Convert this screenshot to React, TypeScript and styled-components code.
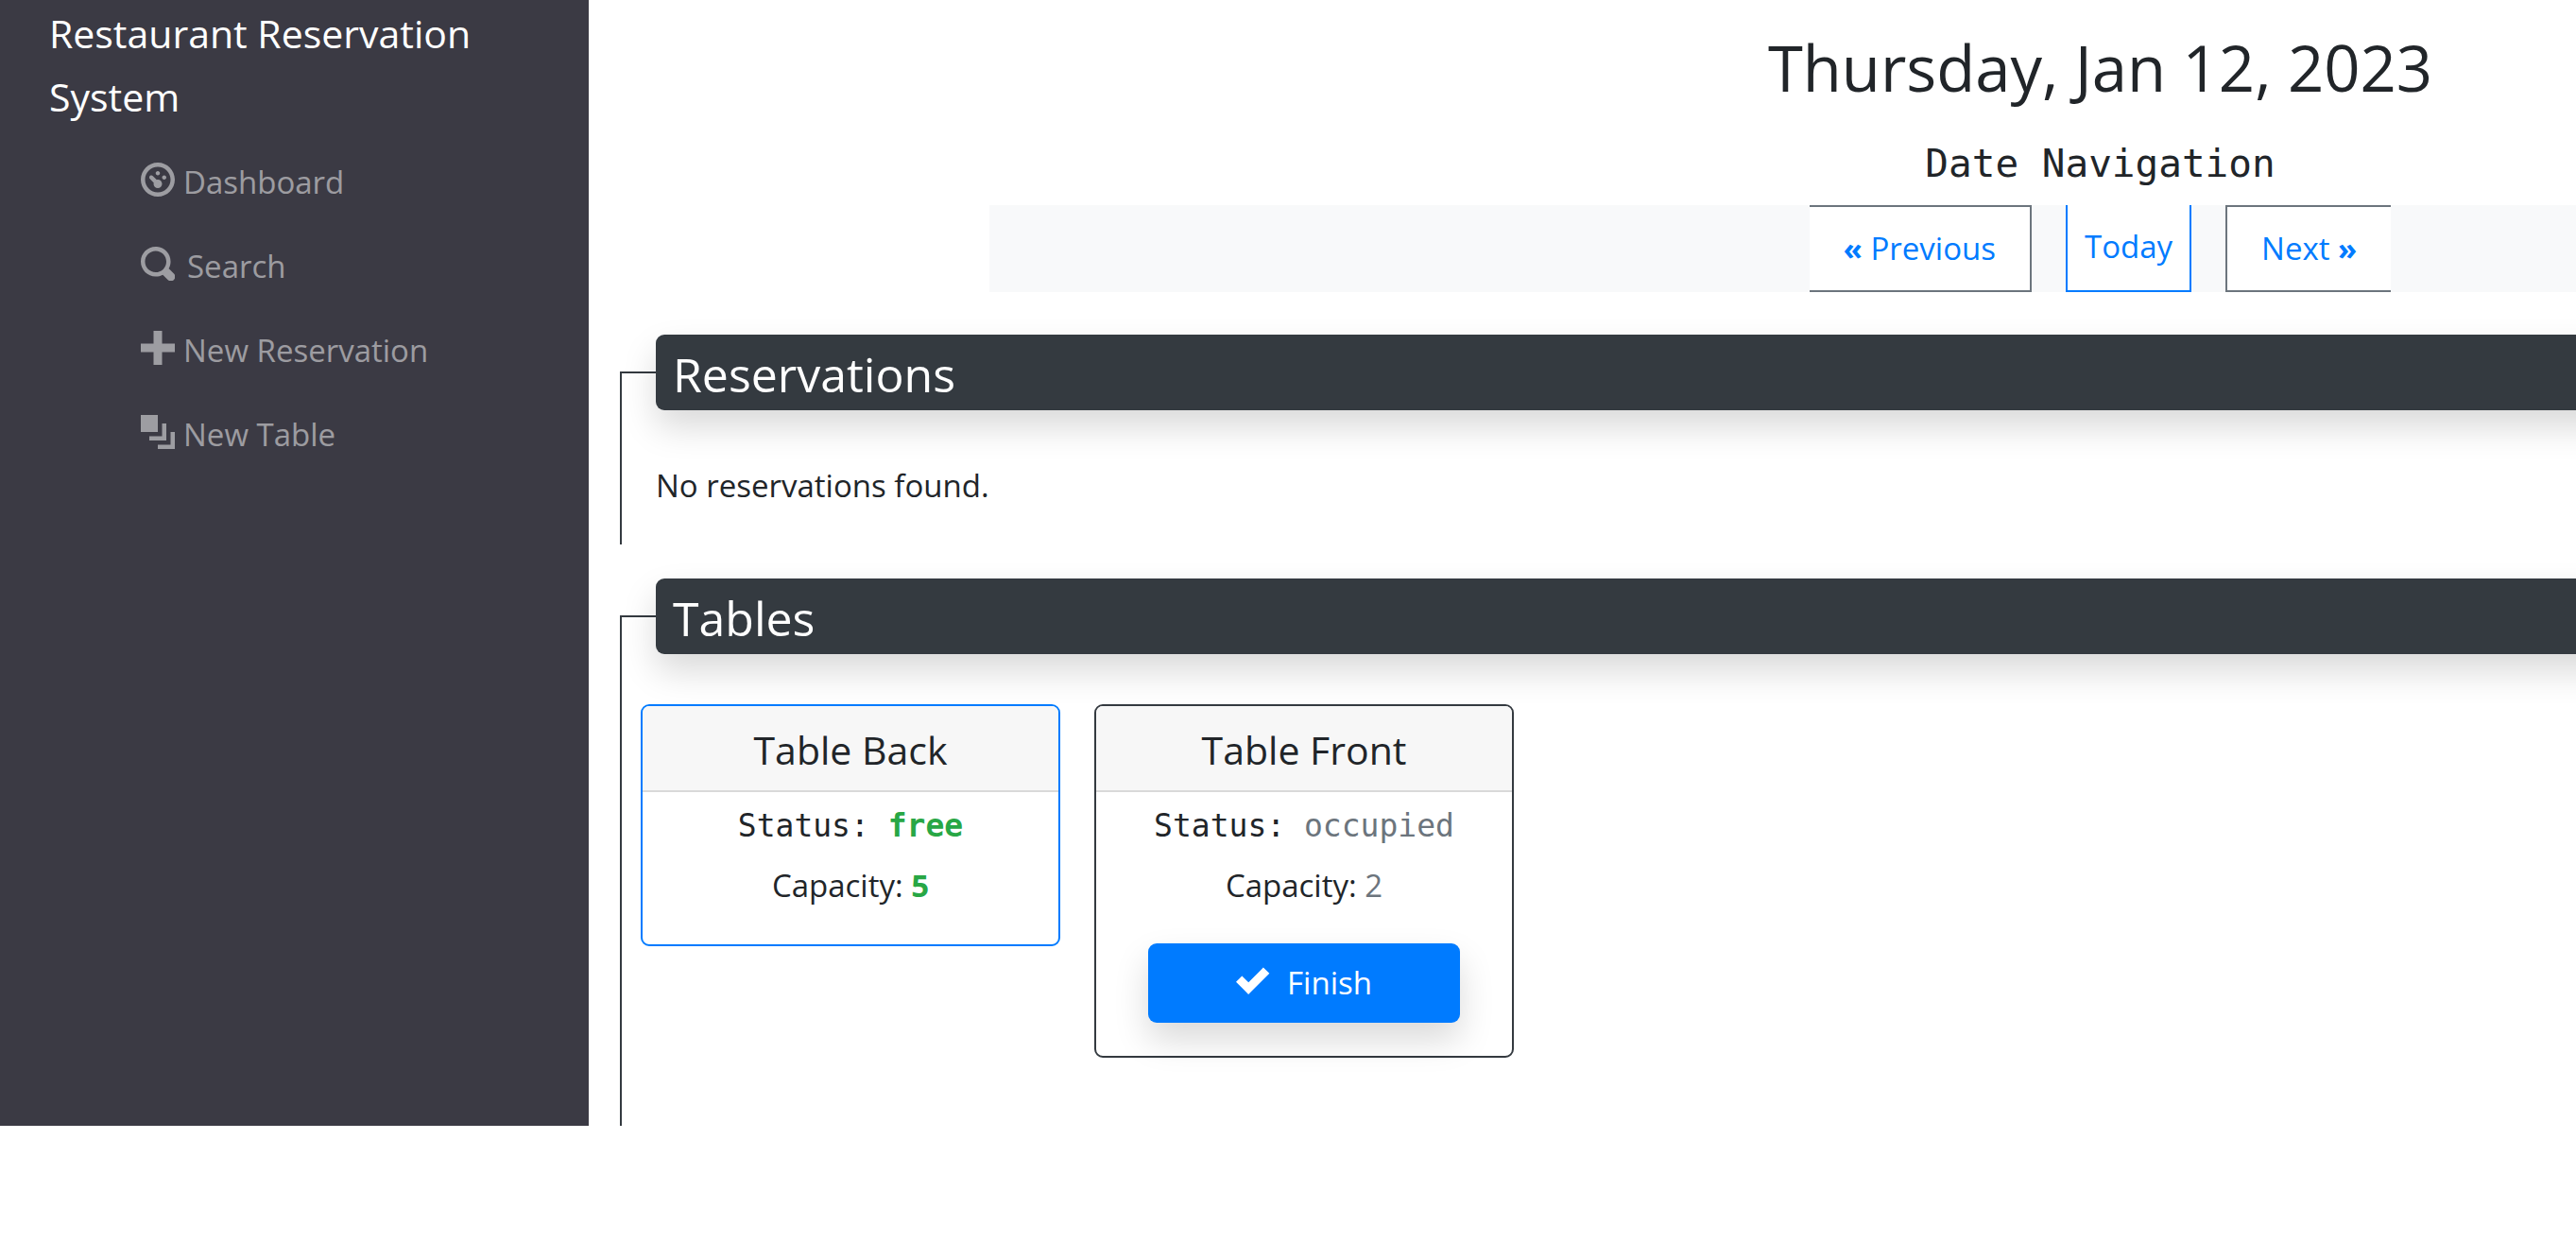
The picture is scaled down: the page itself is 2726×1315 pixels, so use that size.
import React from "react";
import styled, { createGlobalStyle } from "styled-components";

const SANS = '"Segoe UI", "Open Sans", "Noto Sans", sans-serif';
const MONO = 'Consolas, "DejaVu Sans Mono", "Liberation Mono", monospace';

const GlobalStyle = createGlobalStyle`
  *, *::before, *::after { box-sizing: border-box; }
  body {
    margin: 0;
    background: #fff;
    color: #212529;
    font-family: ${SANS};
    font-size: 33px;
    line-height: 54px;
  }
  a { text-decoration: none; }
`;

const Page = styled.div`
  overflow: hidden;
`;

/* The dashboard runs past the right edge of the window, which clips it. */
const Shell = styled.div`
  display: flex;
  width: calc(100vw + 1096px);
`;

const Sidebar = styled.nav`
  flex: 0 0 623px;
  padding: 2px 52px 0;
  background: #3b3a44;
`;

const Brand = styled.a`
  display: block;
  color: #fff;
  font-size: 41px;
  line-height: 67px;
`;

const Menu = styled.ul`
  list-style: none;
  margin: 12px 0 0;
  padding: 0 0 0 97px;
`;

const MenuLink = styled.a<{ $gap: number }>`
  display: flex;
  align-items: center;
  gap: ${(p) => p.$gap}px;
  padding: 18px 0;
  color: rgba(255, 255, 255, 0.5);
  line-height: 53px;
`;

const Icon = styled.svg`
  flex: none;
  width: 36px;
  height: 36px;
  margin-bottom: 6px;
  fill: currentColor;
`;

const Main = styled.main`
  flex: 1;
  padding: 28px 33px 0;
`;

const DateTitle = styled.h1`
  margin: 0 0 32px;
  font-size: 67px;
  font-weight: 400;
  line-height: 86px;
  text-align: center;
`;

const NavTitle = styled.h2`
  margin: 0 0 17px;
  font-family: ${MONO};
  font-size: 41px;
  font-weight: 400;
  line-height: 54px;
  text-align: center;
`;

const DateNav = styled.nav`
  display: flex;
  justify-content: center;
  gap: 36px;
  margin: 0 391px 45px;
  background: #f8f9fa;
`;

const DateLink = styled.a`
  padding: 18px 36px;
  border: 2px solid #6c757d;
  background: #fff;
  color: #007bff;
  line-height: 52px;
`;

const PreviousLink = styled(DateLink)`
  border-left: 0;
`;

const TodayLink = styled(DateLink)`
  padding: 18px;
  border-color: #007bff;
  border-top: 0;
`;

const NextLink = styled(DateLink)`
  border-right: 0;
`;

const Arrow = styled.span`
  font-weight: 700;
`;

const Group = styled.fieldset`
  min-width: 0;
  margin: 0 0 36px;
  padding: 53px 36px 35px;
  border: 0 solid #343a40;
  border-width: 2px 0 0 2px;

  &:last-child {
    margin-bottom: 0;
    padding-bottom: 72px;
  }
`;

const GroupTitle = styled.legend`
  width: 100%;
  padding: 4px 18px 0;
  border-radius: 9px;
  background: #343a40;
  color: #fff;
  font-size: 50px;
  line-height: 76px;
  box-shadow: 0 18px 36px rgba(0, 0, 0, 0.15);
`;

const Message = styled.p`
  margin: 0;
`;

const Cards = styled.div`
  display: flex;
  align-items: flex-start;
  gap: 36px;
  margin-left: -16px;
`;

const Card = styled.article<{ $free: boolean }>`
  width: 444px;
  border: 2px solid ${(p) => (p.$free ? "#007bff" : "#343a40")};
  border-radius: 9px;
  text-align: center;
`;

const CardTitle = styled.h3`
  margin: 0;
  padding: 19px 18px 16px;
  border-bottom: 2px solid #d9d9d9;
  border-radius: 7px 7px 0 0;
  background: #f7f7f7;
  font-size: 41px;
  font-weight: 400;
  line-height: 54px;
`;

const CardBody = styled.div`
  display: flex;
  flex-direction: column;
  gap: 9px;
  padding: 9px 0 35px;
`;

const Status = styled.p`
  margin: 0;
  font-family: ${MONO};
`;

const Capacity = styled.p`
  margin: 0;
`;

const Value = styled.span<{ $free: boolean }>`
  color: ${(p) => (p.$free ? "#28a745" : "#6c757d")};
  font-weight: ${(p) => (p.$free ? 700 : 400)};
`;

const FinishButton = styled.button`
  display: flex;
  align-items: center;
  align-self: center;
  justify-content: center;
  gap: 18px;
  width: 75%;
  margin-top: 25px;
  padding: 15px 18px;
  border: 0;
  border-radius: 9px;
  background: #007bff;
  color: #fff;
  font: inherit;
  box-shadow: 0 18px 36px rgba(0, 0, 0, 0.15);
`;

const icons = {
  dashboard:
    "M4 0c-2.2 0-4 1.8-4 4s1.8 4 4 4 4-1.8 4-4-1.8-4-4-4zm0 1c1.66 0 3 1.34 3 3s-1.34 3-3 3-3-1.34-3-3 1.34-3 3-3zm0 1c-.28 0-.5.22-.5.5s.22.5.5.5.5-.22.5-.5-.22-.5-.5-.5zm-1.66 1a.5.5 0 0 0-.19.84l.91.91c-.02.08-.06.16-.06.25 0 .55.45 1 1 1s1-.45 1-1-.45-1-1-1c-.09 0-.17.04-.25.06l-.91-.91a.5.5 0 0 0-.44-.16.5.5 0 0 0-.06 0zm3.16 0c-.28 0-.5.22-.5.5s.22.5.5.5.5-.22.5-.5-.22-.5-.5-.5z",
  search:
    "M3.5 0c-1.93 0-3.5 1.57-3.5 3.5s1.57 3.5 3.5 3.5c.59 0 1.17-.14 1.66-.41a1 1 0 0 0 .13.13l1 1a1.02 1.02 0 1 0 1.44-1.44l-1-1a1 1 0 0 0-.16-.13c.27-.49.44-1.06.44-1.66 0-1.93-1.55-3.5-3.5-3.5zm0 1c1.39 0 2.5 1.11 2.5 2.5 0 .66-.24 1.27-.66 1.72-.01.01-.02.02-.03.03a1 1 0 0 0-.13.13c-.44.4-1.04.63-1.69.63-1.39 0-2.5-1.11-2.5-2.5s1.11-2.5 2.5-2.5z",
  plus: "M3 0v3h-3v2h3v3h2v-3h3v-2h-3v-3h-2z",
  layers: "M0 0v4h4v-4h-4zm5 2v3h-3v1h4v-4h-1zm2 2v3h-3v1h4v-4h-1z",
  check:
    "M6.41 1l-.69.72-2.78 2.78-.81-.78-.72-.72-1.41 1.41.72.72 1.5 1.5.69.72.72-.72 3.5-3.5.72-.72-1.44-1.41z",
};

function Glyph({ name }: { name: keyof typeof icons }) {
  return (
    <Icon viewBox="0 0 8 8" aria-hidden="true">
      <path d={icons[name]} />
    </Icon>
  );
}

const menu: { icon: keyof typeof icons; label: string; gap: number }[] = [
  { icon: "dashboard", label: "Dashboard", gap: 9 },
  { icon: "search", label: "Search", gap: 13 },
  { icon: "plus", label: "New Reservation", gap: 9 },
  { icon: "layers", label: "New Table", gap: 9 },
];

const tables = [
  { name: "Back", capacity: 5, free: true },
  { name: "Front", capacity: 2, free: false },
];

export default function App() {
  return (
    <Page>
      <GlobalStyle />
      <Shell>
        <Sidebar>
          <Brand href="#">Restaurant Reservation System</Brand>
          <Menu>
            {menu.map((item) => (
              <li key={item.label}>
                <MenuLink href="#" $gap={item.gap}>
                  <Glyph name={item.icon} />
                  {item.label}
                </MenuLink>
              </li>
            ))}
          </Menu>
        </Sidebar>
        <Main>
          <DateTitle>Thursday, Jan 12, 2023</DateTitle>
          <NavTitle>Date Navigation</NavTitle>
          <DateNav aria-label="Date Navigation">
            <PreviousLink href="#">
              <Arrow>«</Arrow> Previous
            </PreviousLink>
            <TodayLink href="#">Today</TodayLink>
            <NextLink href="#">
              Next <Arrow>»</Arrow>
            </NextLink>
          </DateNav>
          <Group>
            <GroupTitle>Reservations</GroupTitle>
            <Message>No reservations found.</Message>
          </Group>
          <Group>
            <GroupTitle>Tables</GroupTitle>
            <Cards>
              {tables.map((table) => (
                <Card key={table.name} $free={table.free}>
                  <CardTitle>Table {table.name}</CardTitle>
                  <CardBody>
                    <Status>
                      Status:{" "}
                      <Value $free={table.free}>
                        {table.free ? "free" : "occupied"}
                      </Value>
                    </Status>
                    <Capacity>
                      Capacity: <Value $free={table.free}>{table.capacity}</Value>
                    </Capacity>
                    {!table.free && (
                      <FinishButton type="button">
                        <Glyph name="check" />
                        Finish
                      </FinishButton>
                    )}
                  </CardBody>
                </Card>
              ))}
            </Cards>
          </Group>
        </Main>
      </Shell>
    </Page>
  );
}
